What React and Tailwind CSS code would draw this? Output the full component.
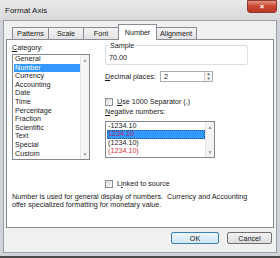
import React from 'react'

const font = "font-['Liberation_Sans',Arial,sans-serif]"

const categories = ['General', 'Number', 'Currency', 'Accounting', 'Date', 'Time', 'Percentage', 'Fraction', 'Scientific', 'Text', 'Special', 'Custom']

const Scrollbar = () => (
  <div className="w-[9px] flex flex-col justify-between items-center bg-[#f4f4f4] border-l border-[#e4e4e4] text-[#9a9a9a] text-[5px] leading-[8px] py-[1px]">
    <span>▲</span>
    <span>▼</span>
  </div>
)

const CheckBox = ({ children }) => (
  <div className="flex items-center gap-[4px]">
    <div className="w-[8px] h-[8px] border border-[#8f8f8f] bg-gradient-to-br from-[#dcdcdc] to-[#fbfbfb]" />
    <span>{children}</span>
  </div>
)

const Tab = ({ label, active, w }) => (
  <div
    className={
      (active
        ? 'h-[16px] -mt-[3px] -mx-[1px] bg-white border-b-0 relative z-10'
        : 'h-[13px] bg-gradient-to-b from-[#f3f3f3] to-[#e2e2e2] -ml-[1px] first:ml-0') +
      ' flex items-center justify-center border border-[#898c95] ' + w
    }
  >
    {label}
  </div>
)

export default function App() {
  return (
    <div className={`${font} w-[280px] h-[258px] bg-[#cfd3d9] text-[7.2px] leading-[9px] text-[#1a1a1a] flex flex-col px-[3px] pb-[3px] border-b-[2px] border-[#4a4a4a]`}>
      <div className="h-[20px] flex items-start shrink-0 bg-gradient-to-b from-[#eaeaea] to-[#d8d8d8] -mx-[3px] pl-[5px] pr-[3px]">
        <span className="text-[8px] mt-[6px] text-[#222]">Format Axis</span>
        <div className="ml-auto w-[30px] h-[13px] rounded-b-[3px] bg-gradient-to-b from-[#e3917f] via-[#c9452f] to-[#bb3a26] border border-[#8a3a30] flex items-center justify-center text-white font-bold text-[8px] leading-none">
          ×
        </div>
      </div>
      <div className="flex-1 flex flex-col bg-[#f0f0f0] border border-[#9aa1ab] px-[2px]">
        <div className="flex pl-[6px] mt-[6px] items-end">
          <Tab label="Patterns" w="w-[37px]" />
          <Tab label="Scale" w="w-[36px]" />
          <Tab label="Font" w="w-[36px]" />
          <Tab label="Number" w="w-[39px]" active />
          <Tab label="Alignment" w="w-[42px]" />
        </div>
        <div className="h-[189px] -mt-[1px] bg-white border border-[#898c95] flex flex-col px-[5px] pt-[3px]">
          <div className="flex">
            <div className="w-[78px] flex flex-col">
              <span><u>C</u>ategory:</span>
              <div className="mt-[2px] h-[106px] border border-[#828790] flex">
                <div className="flex-1 flex flex-col pl-[1px] leading-[8.6px]">
                  {categories.map((c) => (
                    <div key={c} className={c === 'Number' ? 'bg-[#3399ff] text-white px-[1px]' : 'px-[1px]'}>
                      {c}
                    </div>
                  ))}
                </div>
                <Scrollbar />
              </div>
            </div>
            <div className="ml-[15px] flex flex-col">
              <div className="mt-[2px] w-[143px] h-[20px] border border-[#d5dfe5] rounded-[2px] relative px-[3px] pt-[7px]">
                <span className="absolute -top-[5px] left-[3px] bg-white px-[1px]">Sample</span>
                70.00
              </div>
              <div className="flex items-center mt-[6px]">
                <span className="w-[55px]"><u>D</u>ecimal places:</span>
                <div className="w-[53px] h-[11px] border border-[#abadb3] flex items-center">
                  <span className="flex-1 pl-[3px]">2</span>
                  <div className="w-[8px] h-full flex flex-col border-l border-[#d0d0d0] text-[4px] leading-[4.5px] text-[#555] items-center bg-[#f4f4f4]">
                    <span>▲</span>
                    <span>▼</span>
                  </div>
                </div>
              </div>
              <div className="mt-[15px]">
                <CheckBox><u>U</u>se 1000 Separator (,)</CheckBox>
              </div>
              <span className="mt-[1px]"><u>N</u>egative numbers:</span>
              <div className="mt-[5px] w-[110px] h-[37px] border border-[#828790] flex">
                <div className="flex-1 flex flex-col pl-[1px] leading-[8.4px]">
                  <div className="px-[1px]">-1234.10</div>
                  <div className="px-[1px] bg-[#3399ff] text-[#a3205a] outline outline-1 outline-dotted outline-[#1b4f8a] -outline-offset-1">1234.10</div>
                  <div className="px-[1px]">(1234.10)</div>
                  <div className="px-[1px] text-[#e0303a]">(1234.10)</div>
                </div>
                <Scrollbar />
              </div>
              <div className="mt-[21px]">
                <CheckBox>L<u>i</u>nked to source</CheckBox>
              </div>
            </div>
          </div>
          <p className="mt-[5px] leading-[8px]">
            Number is used for general display of numbers.&nbsp; Currency and Accounting
            <br />
            offer specialized formatting for monetary value.
          </p>
        </div>
        <div className="flex justify-end gap-[8px] mt-[4px] pr-[2px]">
          <div className="w-[48px] h-[12px] flex items-center justify-center rounded-[2px] border border-[#3c7fb1] bg-gradient-to-b from-[#eef6fb] to-[#cfe6f5]">OK</div>
          <div className="w-[45px] h-[12px] flex items-center justify-center rounded-[2px] border border-[#707070] bg-gradient-to-b from-[#f2f2f2] to-[#dcdcdc]">Cancel</div>
        </div>
      </div>
    </div>
  )
}
